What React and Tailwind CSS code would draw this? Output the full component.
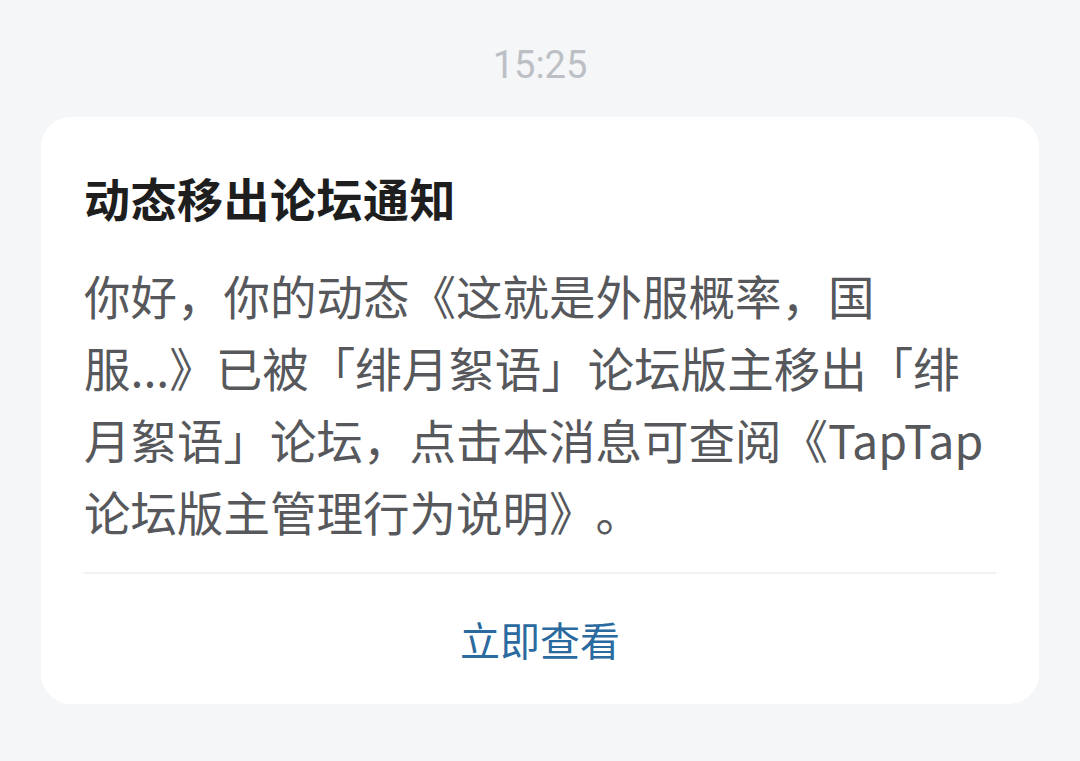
import React from 'react';

const cjk = { fontFamily: '"Noto Sans CJK SC", "Noto Sans", sans-serif' };

export default function App() {
  return (
    <div className="min-h-[761px] w-full bg-[#f5f6f8] pt-[40px] pb-[40px]" style={cjk}>
      {/* Timestamp */}
      <div
        className="text-center text-[38px] leading-[50px] text-[#bcc0c5]"
        style={{ fontFamily: 'Roboto, "Noto Sans", sans-serif' }}
      >
        15:25
      </div>

      {/* Notice card */}
      <div className="mx-[41px] mt-[27px] rounded-[30px] bg-white">
        <div className="px-[43px] pt-[50px]">
          <h2 className="text-[46px] font-bold leading-[60px] text-[#1e1e1e] tracking-[0.5px]">
            动态移出论坛通知
          </h2>
          <p className="mt-[32px] text-[46.5px] leading-[72px] text-[#56585c] whitespace-nowrap [text-spacing-trim:space-all]">
            你好，你的动态《这就是外服概率，国
            <br />
            服...》已被「绯月絮语」论坛版主移出「绯
            <br />
            月絮语」论坛，点击本消息可查阅《TapTap
            <br />
            论坛版主管理行为说明》。
          </p>
          <div className="mt-[25px] h-[2px] bg-[#f0f1f3]" />
        </div>
        <div className="flex h-[130px] items-center justify-center">
          <button className="text-[40px] leading-[50px] text-[#2b6a9e]">立即查看</button>
        </div>
      </div>
    </div>
  );
}
